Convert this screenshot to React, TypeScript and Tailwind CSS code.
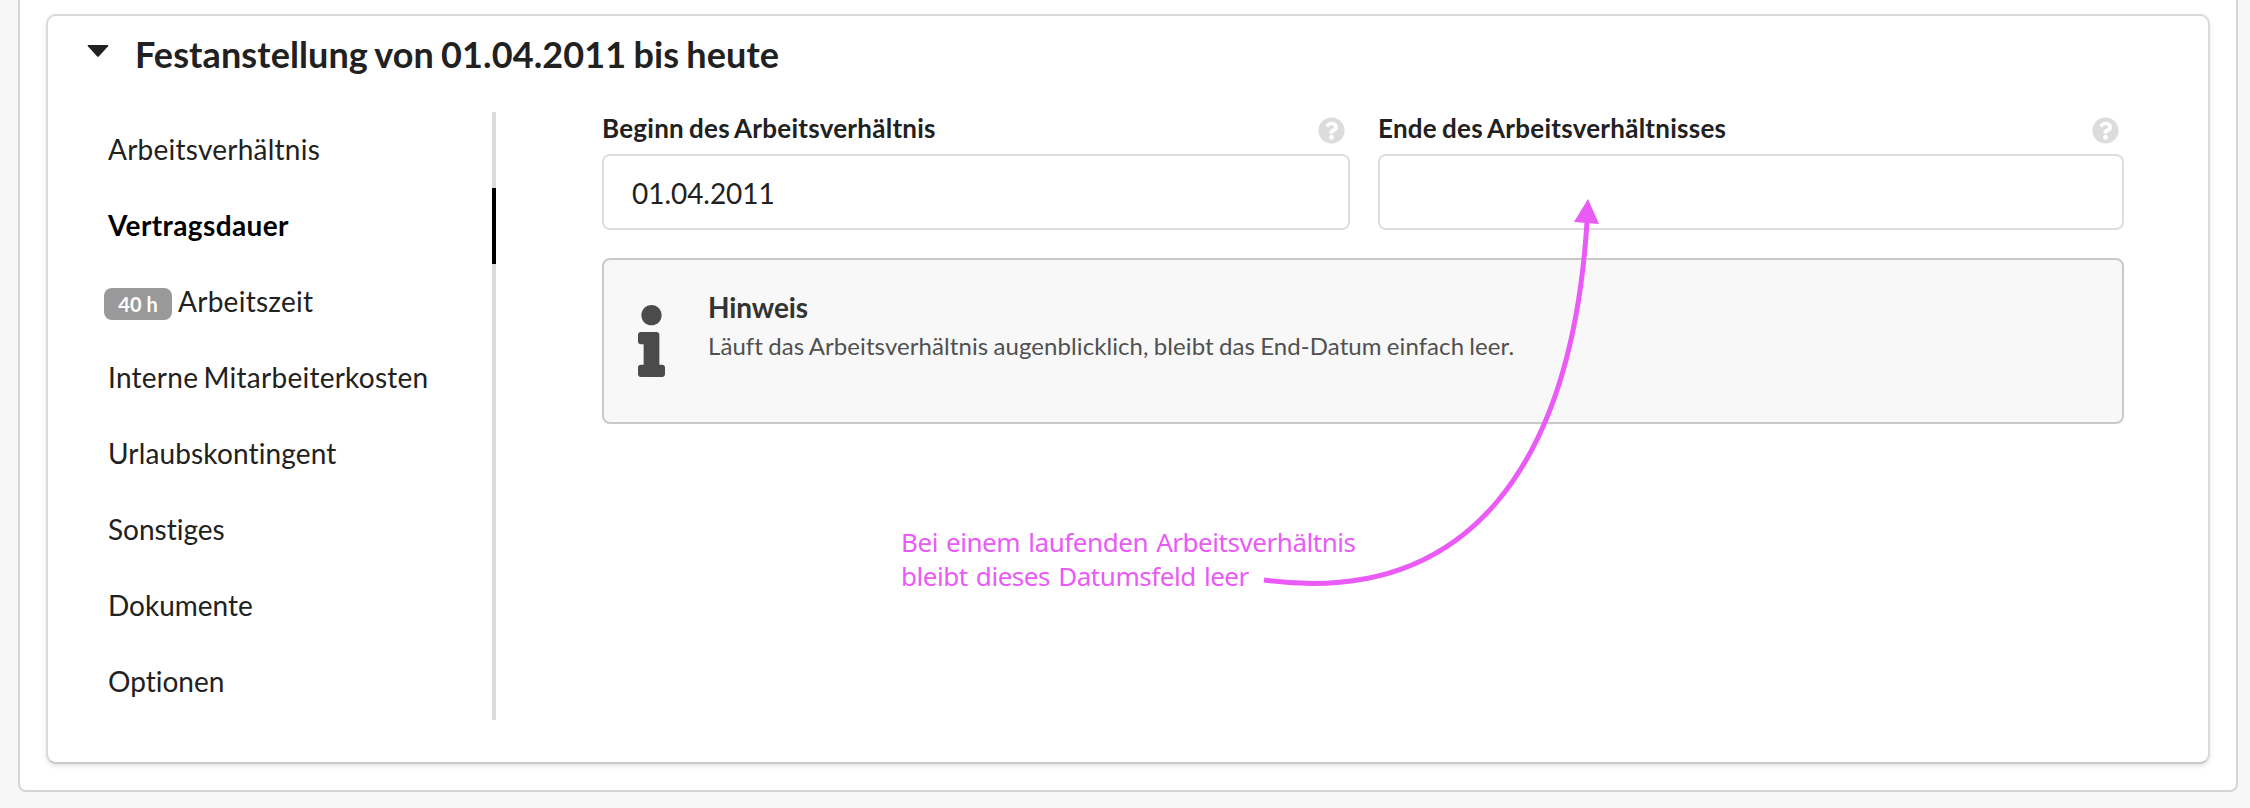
import React from "react";

const items = [
  { label: "Arbeitsverhältnis", tracking: "tracking-[0.24px]" },
  { label: "Vertragsdauer", tracking: "tracking-[0.38px]", active: true },
  { label: "Arbeitszeit", tracking: "tracking-[0.27px]", badge: "40 h" },
  { label: "Interne Mitarbeiterkosten", tracking: "tracking-[0.25px] [word-spacing:-2px]" },
  { label: "Urlaubskontingent", tracking: "tracking-[0.15px]" },
  { label: "Sonstiges", tracking: "" },
  { label: "Dokumente", tracking: "" },
  { label: "Optionen", tracking: "" },
];

function HelpIcon() {
  return (
    <svg viewBox="0 0 512 512" className="mt-[5px] mr-[5px] h-[27px] w-[27px] fill-[#dcdcdc]">
      <path d="M504 256c0 136.997-111.043 248-248 248S8 392.997 8 256C8 119.083 119.043 8 256 8s248 111.083 248 248zM262.655 90c-54.497 0-89.255 22.957-116.549 63.758-3.536 5.286-2.353 12.415 2.715 16.258l34.699 26.31c5.205 3.947 12.621 3.008 16.665-2.122 17.864-22.658 30.113-35.797 57.303-35.797 20.429 0 45.698 13.148 45.698 32.958 0 14.976-12.363 22.667-32.534 33.976C247.128 238.528 216 254.941 216 296v4c0 6.627 5.373 12 12 12h56c6.627 0 12-5.373 12-12v-1.333c0-28.462 83.186-29.647 83.186-106.667 0-58.002-60.165-102-116.531-102zM256 338c-25.365 0-46 20.635-46 46 0 25.364 20.635 46 46 46s46-20.636 46-46c0-25.365-20.635-46-46-46z" />
    </svg>
  );
}

function Field({ label, value }: { label: string; value: string }) {
  return (
    <div>
      <div className="flex h-[42px] justify-between">
        <label className="-mt-px text-[26px] leading-[34px] font-bold tracking-[0.25px] whitespace-nowrap [word-spacing:-1.5px]">
          {label}
        </label>
        <HelpIcon />
      </div>
      <div className="h-[76px] rounded-[8px] border-2 border-[#dededf] bg-white px-[28px] text-[28px] leading-[74px] tracking-[-0.05px]">
        {value}
      </div>
    </div>
  );
}

export default function App() {
  return (
    <div className="relative h-[808px] w-[2250px] overflow-hidden bg-[#f7f7f7] pr-[12px] pl-[18px] font-['Lato',sans-serif] text-[#212121] [font-variant-ligatures:none]">
      <div className="h-[792px] rounded-b-[8px] border-2 border-t-0 border-[#d4d4d5] bg-white px-[26px] pt-[14px]">
        <section className="h-[750px] rounded-[10px] border-2 border-[#d9d9da] border-b-[#c9c9ca] bg-white shadow-[0_2px_4px_rgba(34,36,38,0.12)]">
          <header className="flex h-[96px] pt-[15px] pl-[39px]">
            <svg viewBox="0 0 22 12" className="mt-[14px] h-[12px] w-[22px] fill-[#212121]">
              <path d="M1.5 0h19q1.500 0 .6 1.200L12 11.300q-1 1-2 0L.9 1.200Q0 0 1.500 0z" />
            </svg>
            <h1 className="ml-[26px] text-[36px] leading-[46px] font-bold tracking-[0.1px] [word-spacing:-1.7px]">
              Festanstellung von 01.04.2011 bis heute
            </h1>
          </header>
          <div className="flex">
            <nav className="w-[448px]">
              {items.map((it) => (
                <div
                  key={it.label}
                  className={
                    it.active
                      ? "flex h-[76px] items-center border-r-4 border-black pb-[2px] pl-[60px] text-[28px] font-bold text-black"
                      : "flex h-[76px] items-center border-r-4 border-[#dcdcdd] pb-[2px] pl-[60px] text-[28px]"
                  }
                >
                  {it.badge && (
                    <span className="mt-[6px] mr-[6px] -ml-[4px] flex h-[32px] w-[68px] items-center justify-center rounded-[8px] bg-[#999999] text-[20px] font-bold text-white">
                      {it.badge}
                    </span>
                  )}
                  <span className={it.tracking}>{it.label}</span>
                </div>
              ))}
            </nav>
            <main className="ml-[106px] w-[1522px]">
              <div className="grid grid-cols-[748px_746px] gap-[28px]">
                <Field label="Beginn des Arbeitsverhältnis" value="01.04.2011" />
                <Field label="Ende des Arbeitsverhältnisses" value="" />
              </div>
              <div className="mt-[28px] flex h-[166px] rounded-[8px] border-2 border-[#c9c9ca] bg-[#f8f8f8]">
                <svg
                  viewBox="0 0 192 512"
                  preserveAspectRatio="none"
                  className="mt-[45px] ml-[34px] h-[72px] w-[27px] fill-[#4b4b4b]"
                >
                  <path d="M20 424.229h20V279.771H20c-11.046 0-20-8.954-20-20V212c0-11.046 8.954-20 20-20h112c11.046 0 20 8.954 20 20v212.229h20c11.046 0 20 8.954 20 20V492c0 11.046-8.954 20-20 20H20c-11.046 0-20-8.954-20-20v-47.771c0-11.046 8.954-20 20-20zM96 0C56.235 0 24 32.235 24 72s32.235 72 72 72 72-32.235 72-72S135.764 0 96 0z" />
                </svg>
                <div className="ml-[43px] pt-[29px]">
                  <div className="text-[28px] leading-[36px] font-bold tracking-[-0.1px] text-[#333333]">Hinweis</div>
                  <p className="mt-[3px] text-[24px] leading-[36px] tracking-[0.08px] text-[#505050] [word-spacing:-1px]">
                    Läuft das Arbeitsverhältnis augenblicklich, bleibt das End-Datum einfach leer.
                  </p>
                </div>
              </div>
            </main>
          </div>
        </section>
      </div>
      <p className="absolute top-[525px] left-[901px] font-['Noto_Sans',sans-serif] text-[26px] leading-[34px] tracking-[-0.45px] whitespace-nowrap text-[#ea5af7] [word-spacing:1.8px]">
        Bei einem laufenden Arbeitsverhältnis
        <br />
        bleibt dieses Datumsfeld leer
      </p>
      <svg viewBox="0 0 2250 808" className="absolute top-0 left-0 h-[808px] w-[2250px]">
        <path d="M1264 580C1472 608 1572 460 1587 222" fill="none" stroke="#ea5af7" strokeWidth="5" />
        <path d="M1588 199L1599 224L1574 222Z" fill="#ea5af7" />
      </svg>
    </div>
  );
}
